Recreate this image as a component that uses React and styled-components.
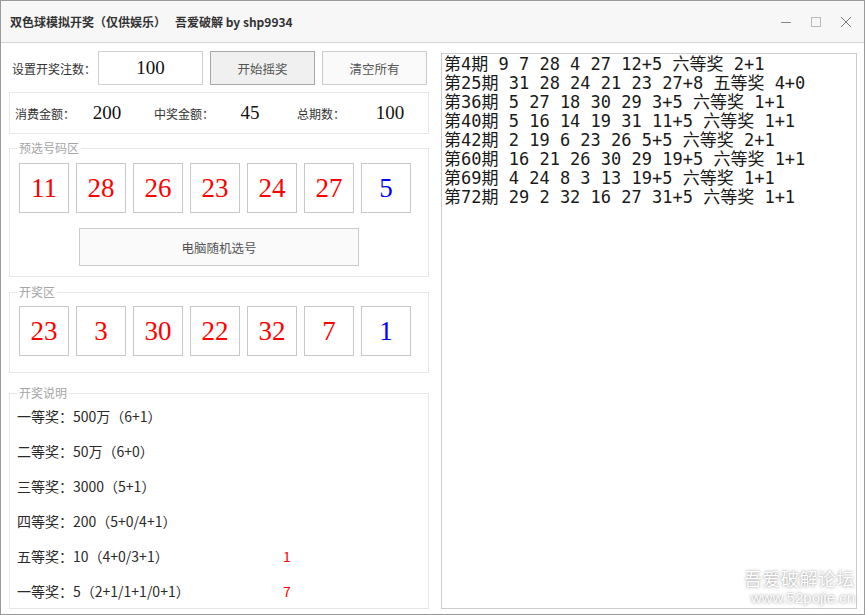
import styled, { createGlobalStyle } from 'styled-components';

const GlobalStyle = createGlobalStyle`
  html, body { margin: 0; padding: 0; background: #fff; }
  body { font-family: "Noto Sans CJK SC", "Liberation Sans", sans-serif; overflow: hidden; }
  * { box-sizing: border-box; }
`;

const Window = styled.div`
  position: relative;
  width: 865px;
  height: 615px;
  border: 1px solid #9a9a9a;
  background: #fff;
  display: flex;
  flex-direction: column;
`;

const TitleBar = styled.div`
  flex: none;
  height: 42px;
  background: #f7f7f7;
  border-bottom: 1px solid #d4d4d4;
  display: flex;
  align-items: center;
  justify-content: space-between;
  padding: 0 3px 0 9px;
`;

const Title = styled.div`
  font-size: 12px;
  font-weight: 700;
  color: #333;
  display: flex;
  gap: 9px;
  white-space: nowrap;
`;

const Controls = styled.div`
  display: flex;
`;

const CtrlBtn = styled.div`
  width: 30px;
  height: 30px;
  display: flex;
  align-items: center;
  justify-content: center;
`;

const Body = styled.div`
  flex: 1;
  display: flex;
  gap: 12px;
  padding: 8px 7px 5px 8px;
  min-height: 0;
`;

const Left = styled.div`
  width: 420px;
  flex: none;
  display: flex;
  flex-direction: column;
`;

const TopRow = styled.div`
  height: 34px;
  display: flex;
  align-items: center;
`;

const Actions = styled.div`
  display: flex;
  gap: 7px;
  margin-left: 7px;
`;

const Label = styled.span`
  font-size: 12px;
  color: #333;
  white-space: nowrap;
  width: ${({ $w }) => $w || 'auto'};
  padding-left: ${({ $pl }) => $pl || '0'};
  flex: none;
`;

const InputBox = styled.div`
  width: 105px;
  height: 34px;
  border: 1px solid #cfcfcf;
  background: #fff;
  display: flex;
  align-items: center;
  justify-content: center;
  font-family: "Liberation Serif", serif;
  font-size: 19px;
  color: #111;
`;

const Button = styled.div`
  width: ${({ $w }) => $w || '105px'};
  height: ${({ $h }) => $h || '34px'};
  border: 1px solid ${({ $pressed }) => ($pressed ? '#a8a8a8' : '#cccccc')};
  background: ${({ $pressed }) => ($pressed ? '#f0f0f0' : '#fafafa')};
  color: #555;
  font-size: 12.5px;
  display: flex;
  align-items: center;
  justify-content: center;
`;

const StatPanel = styled.div`
  margin-top: 7px;
  height: 42px;
  border: 1px solid #e6e6e6;
  display: flex;
  align-items: center;
  gap: 22px;
  padding-left: 5px;
`;

const Stat = styled.div`
  display: flex;
  align-items: center;
`;

const StatValue = styled.span`
  width: 50px;
  text-align: center;
  font-family: "Liberation Serif", serif;
  font-size: 19px;
  color: #111;
`;

const Group = styled.fieldset`
  margin: ${({ $mt }) => $mt} 0 0 0;
  padding: 0 9px ${({ $pb }) => $pb} 9px;
  border: 1px solid #e6e6e6;
  min-width: 0;
`;

const Legend = styled.legend`
  padding: 0 2px;
  margin-left: -2px;
  font-size: 12px;
  line-height: 14px;
  color: #a5a5a5;
`;

const BallRow = styled.div`
  display: flex;
  gap: 7px;
  margin-top: ${({ $mt }) => $mt};
`;

const Ball = styled.div`
  width: 50px;
  height: 50px;
  border: 1px solid #c8c8c8;
  display: flex;
  align-items: center;
  justify-content: center;
  font-family: "Liberation Serif", serif;
  font-size: 27px;
  color: ${({ $blue }) => ($blue ? '#0000ff' : '#ff0000')};
`;

const CenterRow = styled.div`
  display: flex;
  justify-content: center;
  margin-top: 15px;
`;

const PrizeList = styled.div`
  margin-top: -2px;
`;

const PrizeRow = styled.div`
  height: 35px;
  display: grid;
  grid-template-columns: 266px auto;
  align-items: center;
  font-size: 14px;
  color: #2a2a2a;
  margin-left: -2px;
`;

const Hit = styled.span`
  color: #ff0000;
  font-size: 14px;
`;

const Log = styled.div`
  flex: 1;
  margin-top: 2px;
  border: 1px solid #cccccc;
  background: #fff;
  padding: 1px 2px;
  font-family: "DejaVu Sans Mono", "Noto Sans CJK SC", monospace;
  font-size: 17px;
  line-height: 19px;
  color: #1a1a1a;
  white-space: pre;
  overflow: hidden;
`;

const Watermark = styled.div`
  position: absolute;
  right: 9px;
  bottom: 8px;
  display: flex;
  flex-direction: column;
  align-items: flex-end;
  color: #fff;
  text-shadow: 0 0 2px rgba(0, 0, 0, 0.35), 0 0 4px rgba(0, 0, 0, 0.2);
  line-height: 1.15;
`;

const WmTitle = styled.span`
  font-size: 18px;
  letter-spacing: 0.5px;
`;

const WmUrl = styled.span`
  font-family: "Liberation Sans", sans-serif;
  font-size: 15px;
`;

const picked = [11, 28, 26, 23, 24, 27, 5];
const drawn = [23, 3, 30, 22, 32, 7, 1];

const prizes = [
  ['一等奖：500万（6+1）', ''],
  ['二等奖：50万（6+0）', ''],
  ['三等奖：3000（5+1）', ''],
  ['四等奖：200（5+0/4+1）', ''],
  ['五等奖：10（4+0/3+1）', '1'],
  ['一等奖：5（2+1/1+1/0+1）', '7'],
];

const log = [
  '第4期 9 7 28 4 27 12+5 六等奖 2+1',
  '第25期 31 28 24 21 23 27+8 五等奖 4+0',
  '第36期 5 27 18 30 29 3+5 六等奖 1+1',
  '第40期 5 16 14 19 31 11+5 六等奖 1+1',
  '第42期 2 19 6 23 26 5+5 六等奖 2+1',
  '第60期 16 21 26 30 29 19+5 六等奖 1+1',
  '第69期 4 24 8 3 13 19+5 六等奖 1+1',
  '第72期 29 2 32 16 27 31+5 六等奖 1+1',
];

const Balls = ({ nums, mt }) => (
  <BallRow $mt={mt}>
    {nums.map((n, i) => (
      <Ball key={i} $blue={i === nums.length - 1}>{n}</Ball>
    ))}
  </BallRow>
);

export default function App() {
  return (
    <>
      <GlobalStyle />
      <Window>
        <TitleBar>
          <Title>
            <span>双色球模拟开奖（仅供娱乐）</span>
            <span>吾爱破解 by shp9934</span>
          </Title>
          <Controls>
            <CtrlBtn>
              <svg width="12" height="12" viewBox="0 0 12 12">
                <path d="M1 6.5h10" stroke="#888" strokeWidth="1" />
              </svg>
            </CtrlBtn>
            <CtrlBtn>
              <svg width="12" height="12" viewBox="0 0 12 12">
                <rect x="1.5" y="1.5" width="9" height="9" fill="none" stroke="#bbb" />
              </svg>
            </CtrlBtn>
            <CtrlBtn>
              <svg width="12" height="12" viewBox="0 0 12 12">
                <path d="M1 1l10 10M11 1L1 11" stroke="#777" strokeWidth="1" />
              </svg>
            </CtrlBtn>
          </Controls>
        </TitleBar>

        <Body>
          <Left>
            <TopRow>
              <Label $w="89px" $pl="3px">设置开奖注数：</Label>
              <InputBox>100</InputBox>
              <Actions>
                <Button $pressed>开始摇奖</Button>
                <Button>清空所有</Button>
              </Actions>
            </TopRow>

            <StatPanel>
              <Stat>
                <Label $w="67px">消费金额：</Label>
                <StatValue>200</StatValue>
              </Stat>
              <Stat>
                <Label $w="71px">中奖金额：</Label>
                <StatValue>45</StatValue>
              </Stat>
              <Stat>
                <Label $w="68px">总期数：</Label>
                <StatValue>100</StatValue>
              </Stat>
            </StatPanel>

            <Group $mt="7px" $pb="10px">
              <Legend>预选号码区</Legend>
              <Balls nums={picked} mt="8px" />
              <CenterRow>
                <Button $w="280px" $h="38px">电脑随机选号</Button>
              </CenterRow>
            </Group>

            <Group $mt="8px" $pb="16px">
              <Legend>开奖区</Legend>
              <Balls nums={drawn} mt="7px" />
            </Group>

            <Group $mt="13px" $pb="0px">
              <Legend>开奖说明</Legend>
              <PrizeList>
                {prizes.map(([text, hit], i) => (
                  <PrizeRow key={i}>
                    <span>{text}</span>
                    <Hit>{hit}</Hit>
                  </PrizeRow>
                ))}
              </PrizeList>
            </Group>
          </Left>

          <Log>
            {log.map((line, i) => (
              <div key={i}>{line}</div>
            ))}
          </Log>
        </Body>

        <Watermark>
          <WmTitle>吾爱破解论坛</WmTitle>
          <WmUrl>www.52pojie.cn</WmUrl>
        </Watermark>
      </Window>
    </>
  );
}
